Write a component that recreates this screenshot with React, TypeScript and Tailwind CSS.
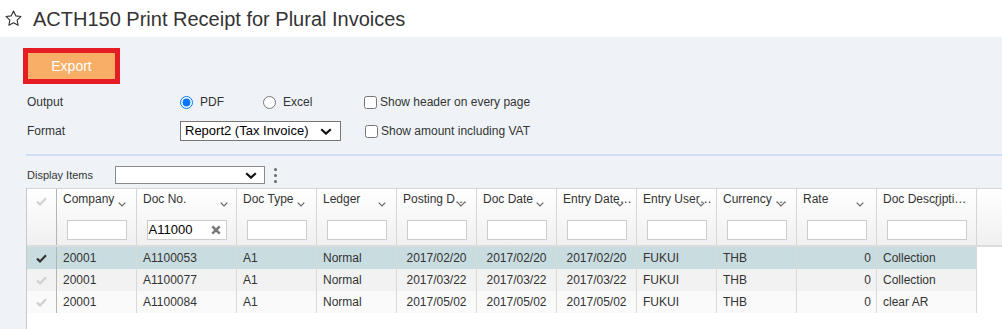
import React from "react";

type Col = { label: string; w: string; chev: string; filterW: string; filter?: string };

const cols: Col[] = [
  { label: "Company", w: "w-[80px]", chev: "right-[10px]", filterW: "w-[60px]" },
  { label: "Doc No.", w: "w-[100px]", chev: "right-[8px]", filterW: "w-[80px]", filter: "A11000" },
  { label: "Doc Type", w: "w-[80px]", chev: "right-[11px]", filterW: "w-[60px]" },
  { label: "Ledger", w: "w-[80px]", chev: "right-[10px]", filterW: "w-[60px]" },
  { label: "Posting D…", w: "w-[80px]", chev: "right-[11px]", filterW: "w-[60px]" },
  { label: "Doc Date", w: "w-[80px]", chev: "right-[12px]", filterW: "w-[60px]" },
  { label: "Entry Date…", w: "w-[80px]", chev: "right-[12px]", filterW: "w-[60px]" },
  { label: "Entry User…", w: "w-[80px]", chev: "right-[11px]", filterW: "w-[60px]" },
  { label: "Currency …", w: "w-[80px]", chev: "right-[11px]", filterW: "w-[60px]" },
  { label: "Rate", w: "w-[80px]", chev: "right-[12px]", filterW: "w-[60px]" },
  { label: "Doc Descripti…", w: "w-[100px]", chev: "right-[34px]", filterW: "w-[80px]" },
];

const rows = [
  { sel: true, bg: "bg-[#c9dde1]", no: "A1100053", date: "2017/02/20", desc: "Collection" },
  { sel: false, bg: "bg-[#f2f2f2]", no: "A1100077", date: "2017/03/22", desc: "Collection" },
  { sel: false, bg: "bg-[#fafafa]", no: "A1100084", date: "2017/05/02", desc: "clear AR" },
];

function Check({ color }: { color: string }) {
  return (
    <svg width="11" height="9" viewBox="0 0 11 9" fill="none">
      <path d="M1 4.6 L4 7.4 L10 1.2" stroke={color} strokeWidth="2.2" strokeLinejoin="miter" />
    </svg>
  );
}

function SortChev({ pos }: { pos: string }) {
  return (
    <svg
      className={`absolute top-[13px] ${pos}`}
      width="8"
      height="5"
      viewBox="0 0 8 5"
      fill="none"
    >
      <path d="M0.7 0.7 L4 4 L7.3 0.7" stroke="#666" strokeWidth="1.2" />
    </svg>
  );
}

function BoldChev() {
  return (
    <svg width="12" height="7" viewBox="0 0 12 7" fill="none">
      <path d="M1.2 1.2 L6 5.6 L10.8 1.2" stroke="#111" strokeWidth="2.2" />
    </svg>
  );
}

export default function App() {
  return (
    <div className="flex h-[329px] w-[1002px] flex-col overflow-hidden bg-[#eff3f8] font-['Liberation_Sans',Arial,sans-serif] text-[12px] text-[#333]">
      {/* Title bar */}
      <div className="flex h-[37px] shrink-0 items-center bg-white pl-[4px]">
        <svg width="19" height="19" viewBox="0 0 24 24" fill="none">
          <path
            d="M12 2.6l2.85 6.05 6.6.78-4.88 4.55 1.3 6.55L12 17.25l-5.87 3.28 1.3-6.55-4.88-4.55 6.6-.78z"
            stroke="#333"
            strokeWidth="1.4"
            strokeLinejoin="round"
          />
        </svg>
        <h1 className="ml-[10px] text-[20px] leading-none text-[#333]">
          ACTH150 Print Receipt for Plural Invoices
        </h1>
      </div>

      {/* Export */}
      <div className="shrink-0 pl-[23px] pt-[11px]">
        <div className="flex h-[36px] w-[97px] items-center justify-center border-[5px] border-[#e51c24] bg-[#f8ae66] text-[14px] text-white">
          Export
        </div>
      </div>

      {/* Form */}
      <div className="mt-[8px] flex shrink-0 flex-col gap-[9px] pl-[27px]">
        <div className="flex h-[20px] items-center">
          <div className="w-[153px]">Output</div>
          <label className="flex w-[83px] items-center gap-[7px]">
            <input type="radio" name="out" defaultChecked className="m-0 h-[13px] w-[13px]" />
            <span>PDF</span>
          </label>
          <label className="flex w-[101px] items-center gap-[7px]">
            <input type="radio" name="out" className="m-0 h-[13px] w-[13px]" />
            <span>Excel</span>
          </label>
          <label className="flex items-center gap-[3px]">
            <input type="checkbox" className="m-0 h-[13px] w-[13px]" />
            <span>Show header on every page</span>
          </label>
        </div>
        <div className="flex h-[20px] items-center">
          <div className="w-[153px]">Format</div>
          <div className="flex h-[20px] w-[161px] items-center justify-between border border-[#767676] bg-white pl-[4px] pr-[8px] text-[13px] text-black">
            <span>Report2 (Tax Invoice)</span>
            <BoldChev />
          </div>
          <label className="ml-[24px] flex items-center gap-[3px]">
            <input type="checkbox" className="m-0 h-[13px] w-[13px]" />
            <span>Show amount including VAT</span>
          </label>
        </div>
      </div>

      {/* Divider */}
      <div className="ml-[26px] mt-[13px] h-[2px] shrink-0 bg-[#cfdef2]" />

      {/* Display items */}
      <div className="mt-[10px] flex h-[18px] shrink-0 items-center pl-[27px]">
        <div className="w-[88px] text-[11px]">Display Items</div>
        <div className="flex h-[18px] w-[150px] items-center justify-end border border-[#8a8a8a] bg-white pr-[7px]">
          <BoldChev />
        </div>
        <div className="ml-[9px] flex flex-col gap-[3px]">
          <span className="h-[3px] w-[3px] rounded-full bg-[#666]" />
          <span className="h-[3px] w-[3px] rounded-full bg-[#666]" />
          <span className="h-[3px] w-[3px] rounded-full bg-[#666]" />
        </div>
      </div>

      {/* Grid */}
      <div className="ml-[26px] mt-[4px] flex flex-1 flex-col border-l border-[#c8c8c8] bg-white">
        {/* header */}
        <div className="flex h-[59px] shrink-0 border-b-2 border-t border-b-[#dcdcdc] border-t-[#d6d6d6] bg-linear-to-b from-white to-[#f0f0f0]">
          <div className="flex w-[30px] shrink-0 justify-center border-r border-[#b4b4b4] pt-[8px]">
            <Check color="#d2d2d2" />
          </div>
          {cols.map((c) => (
            <div
              key={c.label}
              className={`relative flex shrink-0 flex-col border-r border-[#d6d6d6] pt-[3px] ${c.w}`}
            >
              <div className="h-[14px] whitespace-nowrap px-[6px] leading-[14px]">
                {c.label}
              </div>
              <SortChev pos={c.chev} />
              <div
                className={`mt-[14px] flex h-[20px] items-center justify-between self-center border border-[#cccccc] bg-white ${c.filterW}`}
              >
                {c.filter ? (
                  <>
                    <span className="pl-[1px] text-[13px] text-black">{c.filter}</span>
                    <svg className="mr-[5px]" width="10" height="10" viewBox="0 0 10 10" fill="none">
                      <path d="M1.3 1.3 L8.7 8.7 M8.7 1.3 L1.3 8.7" stroke="#7a7a7a" strokeWidth="2.6" />
                    </svg>
                  </>
                ) : null}
              </div>
            </div>
          ))}
          <div className="flex-1" />
        </div>

        {/* rows */}
        {rows.map((r) => (
          <div key={r.no} className={`flex h-[22px] w-[950px] leading-[22px] ${r.bg}`}>
            <div className="flex w-[30px] shrink-0 items-center justify-center border-r border-[#b4b4b4]">
              <Check color={r.sel ? "#333" : "#cfcfcf"} />
            </div>
            <div className="w-[80px] shrink-0 border-r border-[#d9d9d9] px-[6px]">20001</div>
            <div className="w-[100px] shrink-0 border-r border-[#d9d9d9] px-[6px]">{r.no}</div>
            <div className="w-[80px] shrink-0 border-r border-[#d9d9d9] px-[6px]">A1</div>
            <div className="w-[80px] shrink-0 border-r border-[#d9d9d9] px-[6px]">Normal</div>
            <div className="w-[80px] shrink-0 border-r border-[#d9d9d9] text-center">{r.date}</div>
            <div className="w-[80px] shrink-0 border-r border-[#d9d9d9] text-center">{r.date}</div>
            <div className="w-[80px] shrink-0 border-r border-[#d9d9d9] text-center">{r.date}</div>
            <div className="w-[80px] shrink-0 border-r border-[#d9d9d9] px-[6px]">FUKUI</div>
            <div className="w-[80px] shrink-0 border-r border-[#d9d9d9] px-[6px]">THB</div>
            <div className="w-[80px] shrink-0 border-r border-[#d9d9d9] px-[5px] text-right">0</div>
            <div className="w-[100px] shrink-0 border-r border-[#d9d9d9] px-[6px]">{r.desc}</div>
          </div>
        ))}
      </div>
    </div>
  );
}
